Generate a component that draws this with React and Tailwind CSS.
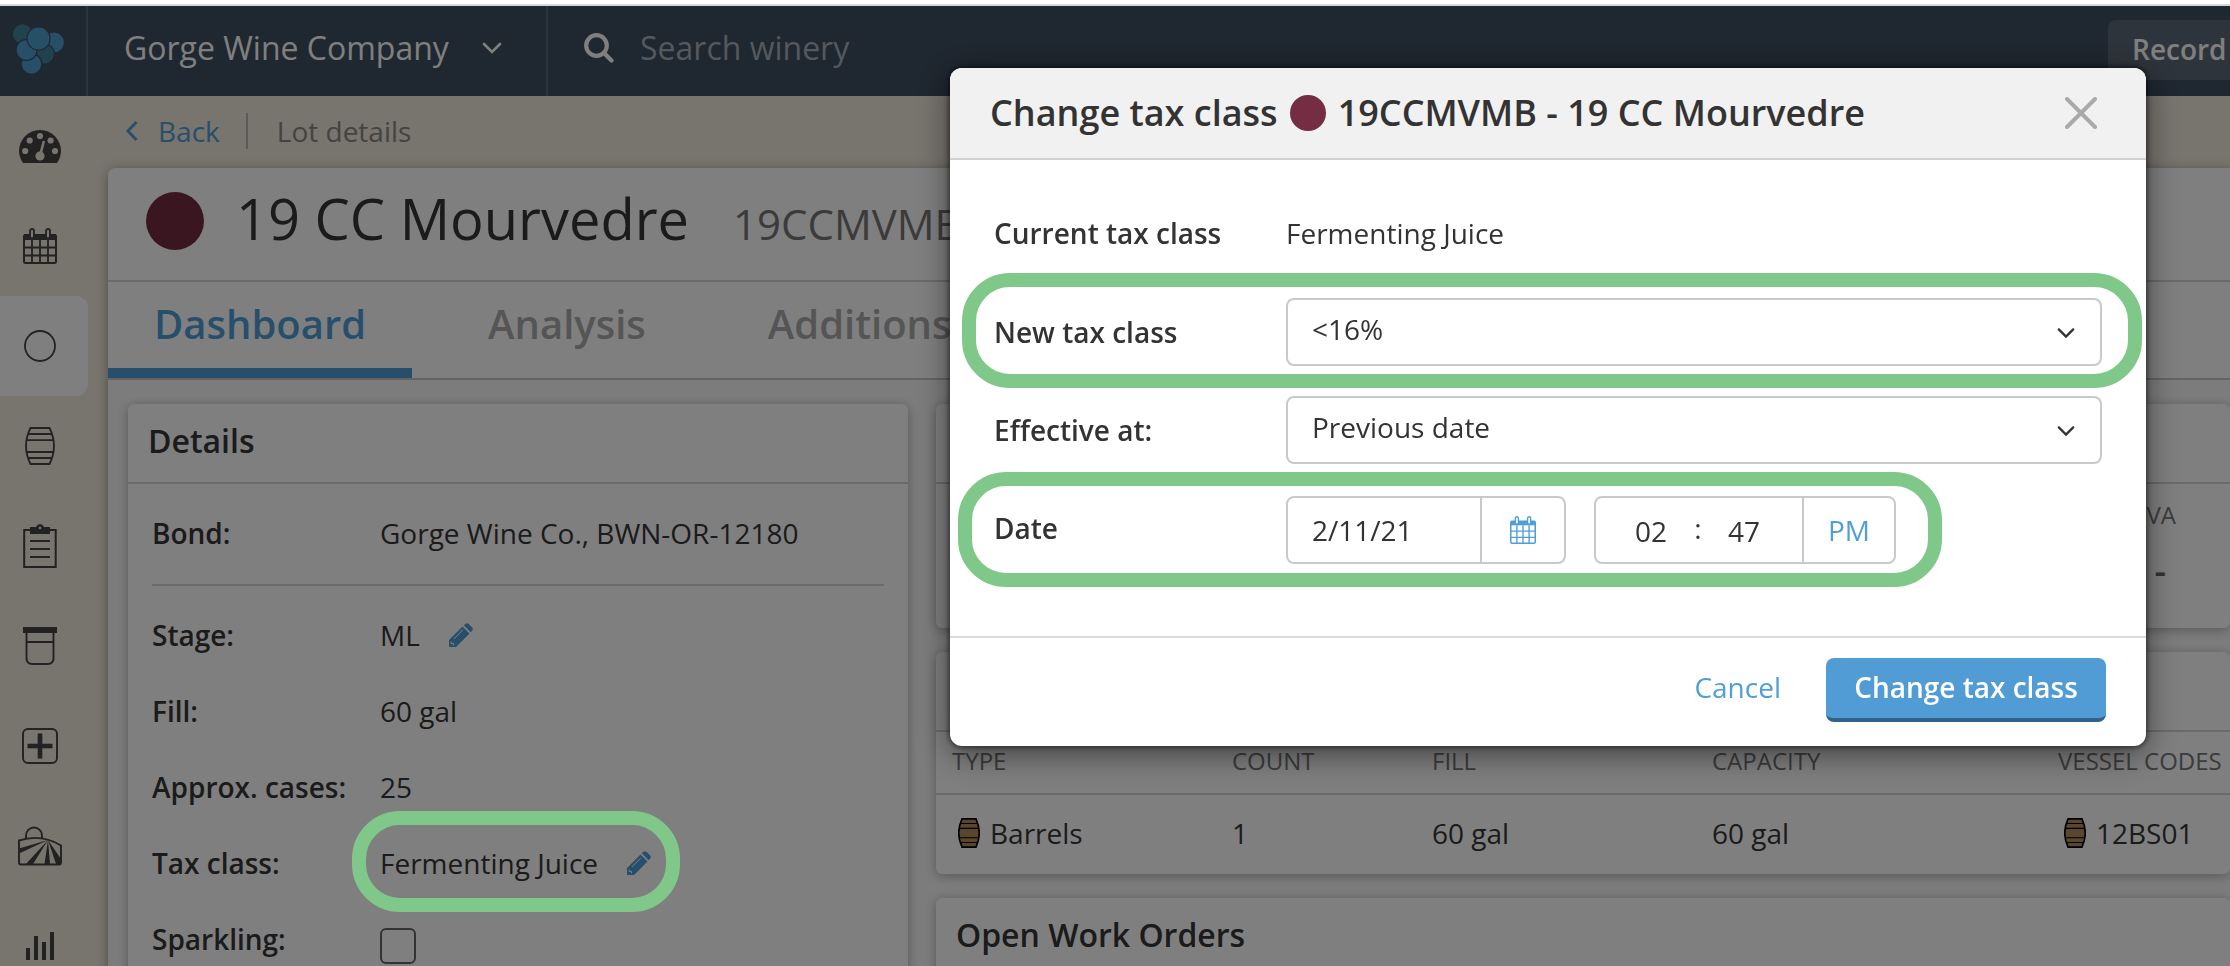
const blue = "text-[#4f9fd8]";

function Barrel({ className, filled }) {
  return (
    <svg viewBox="0 0 30 38" preserveAspectRatio="none" className={className} fill="none" stroke={filled ? "#000" : "#444"} strokeWidth={filled ? 2.2 : 1.8} aria-hidden="true">
      <path d="M5.500 1h19q9 18 0 36h-19q-9-18 0-36z" fill={filled ? "#b48c5c" : "none"} />
      <path d="M3.500 7h23M1.500 13.200h27M1.500 25h27M3 31h24" strokeWidth={filled ? 1.4 : 1.8} />
    </svg>
  );
}

function Chevron({ className }) {
  return (
    <svg viewBox="0 0 20 12" className={className} fill="none" stroke="currentColor" strokeWidth="2.600" strokeLinecap="round" aria-hidden="true">
      <path d="M2 2l8 8 8-8" />
    </svg>
  );
}

function CalendarIcon({ className }) {
  return (
    <svg viewBox="0 0 34 36" preserveAspectRatio="none" className={className} fill="none" stroke="currentColor" aria-hidden="true">
      <rect x="1" y="7" width="32" height="28" rx="1.500" strokeWidth="2" />
      <path d="M1 6h32v6H1z" fill="currentColor" stroke="none" />
      <path d="M1 19.500h32M1 27.500h32M9 12v23M17 12v23M25 12v23" strokeWidth="1.800" />
      <rect x="7" y="1" width="4" height="9.500" rx="2" strokeWidth="1.800" className="fill-[var(--cal-bg)]" />
      <rect x="23" y="1" width="4" height="9.500" rx="2" strokeWidth="1.800" className="fill-[var(--cal-bg)]" />
    </svg>
  );
}

function Pencil() {
  return (
    <svg viewBox="0 0 24 24" className="size-6" aria-hidden="true">
      <path fill="#4f9fd8" d="M0 24v-7L13.500 3.500l7 7L7 24zM14.800 2.300L16.500.8q1.500-1.300 3 0l3.700 3.700q1.300 1.500 0 3l-1.500 1.700z" />
      <path d="M4.800 16L14 6.800M2.200 18.500v2h2.300v1.800" stroke="#fff" strokeWidth="1" fill="none" />
    </svg>
  );
}

function Logo() {
  return (
    <svg viewBox="0 0 54 52" className="h-[52px] w-[54px]" stroke="#3e4e60" strokeWidth="1.200" aria-hidden="true">
      <circle cx="10.500" cy="11" r="10.300" fill="#3f8498" />
      <circle cx="42" cy="19.500" r="10.500" fill="#4f9fd0" />
      <circle cx="32.500" cy="31" r="10" fill="#3f8498" />
      <circle cx="19.500" cy="41" r="10.300" fill="#4f9fd0" />
      <circle cx="14.500" cy="27" r="10.500" fill="#4f9fd0" />
      <circle cx="26.500" cy="15.500" r="11.500" fill="#4f9fd0" />
    </svg>
  );
}

const sideIcons = [
  {
    label: "Dashboard",
    icon: (
      <svg viewBox="0 0 42 33" className="h-[33px] w-[42px]" aria-hidden="true">
        <path fill="#444" d="M4 33Q0 27 0 21A21 21 0 0 1 42 21Q42 27 38 33z" />
        <g fill="#f0e8dc">
          <circle cx="21" cy="6" r="3.100" /><circle cx="10.700" cy="10.500" r="3.100" /><circle cx="31.600" cy="10.500" r="3.100" />
          <circle cx="6.200" cy="21" r="3.100" /><circle cx="36" cy="21" r="3.100" /><circle cx="21" cy="26" r="4.600" />
        </g>
        <path d="M21 26l3.600-14" stroke="#f0e8dc" strokeWidth="2.600" strokeLinecap="round" />
      </svg>
    ),
  },
  { label: "Calendar", icon: <CalendarIcon className="h-9 w-[34px]" /> },
  { label: "Lots", active: true, icon: <svg viewBox="0 0 32 32" className="size-8" aria-hidden="true"><circle cx="16" cy="16" r="15" fill="none" stroke="#444" strokeWidth="1.800" /></svg> },
  { label: "Vessels", icon: <Barrel className="h-[38px] w-[30px]" /> },
  {
    label: "Work orders",
    icon: (
      <svg viewBox="0 0 34 44" className="h-11 w-[34px]" fill="none" stroke="#444" aria-hidden="true">
        <rect x="1.200" y="6" width="31.500" height="37" strokeWidth="2" />
        <path d="M7 3h6q1.500-3 4-3t4 3h6v7H7z" fill="#444" stroke="none" />
        <circle cx="17" cy="4" r="1.300" fill="#f0e8dc" stroke="none" />
        <path d="M7 17h20M7 25h20M7 33h20" strokeWidth="1.800" />
      </svg>
    ),
  },
  {
    label: "Tanks",
    icon: (
      <svg viewBox="0 0 34 38" className="h-[38px] w-[34px]" fill="none" stroke="#444" strokeWidth="1.900" aria-hidden="true">
        <path d="M0 0h34v6H0z" fill="#444" stroke="none" />
        <path d="M3.500 6v25q0 6 6 6h15q6 0 6-6V6M3.500 15h27" />
      </svg>
    ),
  },
  {
    label: "Add",
    icon: (
      <svg viewBox="0 0 36 36" className="size-9" fill="none" stroke="#444" aria-hidden="true">
        <rect x="1" y="1" width="34" height="34" rx="5" strokeWidth="1.900" />
        <path d="M5.500 18h25M18 5.500v25" strokeWidth="4.600" />
      </svg>
    ),
  },
  {
    label: "Vineyards",
    icon: (
      <svg viewBox="0 0 44 40" className="h-10 w-11" fill="none" stroke="#444" strokeWidth="1.900" aria-hidden="true">
        <path d="M1 14.500q22-7 42 5v17q0 2-2 2H3q-2 0-2-2z" />
        <path d="M8 12V9.500a8 8 0 0 1 16 0V12" />
        <path d="M30 14L1 22.500v5zM30 14L8 38h7zM30 14l-3.500 24h5.500zM30 14l8 24h5v-5z" fill="#444" stroke="none" />
      </svg>
    ),
  },
  {
    label: "Reports",
    icon: (
      <svg viewBox="0 0 28 28" className="size-7" fill="#444" aria-hidden="true">
        <path d="M0 16h4v12H0zM8 4h4v24H8zM16 10h4v18h-4zM24 0h4v28h-4z" />
      </svg>
    ),
  },
];

function Sidebar() {
  return (
    <nav className="flex w-[108px] shrink-0 flex-col text-[#444] [--cal-bg:#f0e8dc]">
      {sideIcons.map((s) => (
        <a key={s.label} href="#" aria-label={s.label} className={`flex h-[100px] w-[88px] shrink-0 items-center justify-center pr-2 ${s.active ? "rounded-r-xl bg-white" : ""}`}>
          {s.icon}
        </a>
      ))}
    </nav>
  );
}

function Header() {
  return (
    <header className="flex h-24 shrink-0 border-t-4 border-white bg-[#3e4e60] text-white">
      <div className="flex h-full w-full border-t-2 border-[#d5d9dc]">
        <a href="#" aria-label="Home" className="flex w-[88px] shrink-0 items-center border-r-2 border-[#5c6876] pb-1 pl-3"><Logo /></a>
        <button className="flex w-[460px] shrink-0 items-center justify-between border-r-2 border-[#5c6876] pl-9 pr-11 pb-1.5 text-[32px] text-white">
          Gorge Wine Company
          <Chevron className="h-3 w-5" />
        </button>
        <label className="flex flex-1 items-center gap-[26px] pb-1.5 pl-9">
          <svg viewBox="0 0 30 30" className="size-[30px]" fill="none" stroke="#fff" strokeWidth="4.200" strokeLinecap="round" aria-hidden="true">
            <circle cx="12.500" cy="12.500" r="10.300" /><path d="M20 20l7.500 7.500" />
          </svg>
          <input aria-label="Search winery" placeholder="Search winery" className="w-96 bg-transparent text-[32px] outline-none placeholder:text-[#aab0b8]" />
        </label>
        <div className="w-[122px] shrink-0 pt-[14px]">
          <button className="h-[60px] w-60 whitespace-nowrap rounded-lg bg-[#5c6876] pb-0.5 pl-6 text-left text-[28px] font-semibold">Record</button>
        </div>
      </div>
    </header>
  );
}

const card = "rounded-md bg-white shadow-[0_2px_12px_rgba(0,0,0,0.3)]";
const cardTitle = "px-5 pt-4 text-[32px] leading-[42px] font-semibold";

function Field({ label, children }) {
  return (
    <div className="flex h-[76px] items-center">
      <dt className="w-[228px] shrink-0 font-semibold">{label}</dt>
      <dd className="flex items-center">{children}</dd>
    </div>
  );
}

function Details() {
  return (
    <section className={`${card} h-[620px] w-[780px] shrink-0`}>
      <h2 className={`${cardTitle} h-20 border-b-2 border-[#d4d4d4]`}>Details</h2>
      <dl className="px-6 pt-[11px] text-[28px]">
        <div className="mb-[11px] border-b-2 border-[#d4d4d4] pb-[13px]">
          <Field label="Bond:">Gorge Wine Co., BWN-OR-12180</Field>
        </div>
        <Field label="Stage:">ML<button aria-label="Edit stage" className="ml-[29px]"><Pencil /></button></Field>
        <Field label="Fill:">60 gal</Field>
        <Field label="Approx. cases:">25</Field>
        <Field label="Tax class:">Fermenting Juice<button aria-label="Edit tax class" className="ml-[29px]"><Pencil /></button></Field>
        <Field label={<label htmlFor="sparkling">Sparkling:</label>}>
          <input id="sparkling" type="checkbox" className="mt-3.5 size-9 appearance-none rounded-md border-2 border-[#666]" />
        </Field>
      </dl>
    </section>
  );
}

function Vessels() {
  return (
    <section className={card}>
      <h2 className={`${cardTitle} h-20 border-b-2 border-[#d4d4d4]`}>Vessels</h2>
      <table className="w-full table-fixed text-left">
        <thead>
          <tr className="h-[62px] border-b-2 border-[#d4d4d4] align-top text-[24px] leading-[58px] text-[#777]">
            <th className="w-[296px] pl-4 font-normal">TYPE</th>
            <th className="w-[200px] font-normal">COUNT</th>
            <th className="w-[280px] font-normal">FILL</th>
            <th className="w-[346px] font-normal">CAPACITY</th>
            <th className="font-normal whitespace-nowrap">VESSEL CODES</th>
          </tr>
        </thead>
        <tbody>
          <tr className="h-20 text-[28px] *:pb-[3px]">
            <td className="pl-4"><span className="flex items-center gap-[10px] pl-1.5"><Barrel filled className="h-[30px] w-[22px]" />Barrels</span></td>
            <td>1</td>
            <td>60 gal</td>
            <td>60 gal</td>
            <td><span className="flex items-center gap-[10px] pl-1.5"><Barrel filled className="h-[30px] w-[22px]" />12BS01</span></td>
          </tr>
        </tbody>
      </table>
    </section>
  );
}

const ring = "pointer-events-none absolute rounded-[48px] border-[14px] border-[#80c88a]";
const box = "h-[68px] rounded-lg border-2 border-[#c9c9c9] bg-white";

function Select({ id, value }) {
  return (
    <div className="relative flex-1">
      <select id={id} className={`${box} w-full appearance-none pb-1.5 pl-6 text-[28px]`}>
        <option>{value}</option>
      </select>
      <Chevron className="pointer-events-none absolute top-[29px] right-[27px] h-3 w-[18px]" />
    </div>
  );
}

function Modal() {
  return (
    <div className="fixed inset-x-0 top-1.5 bottom-0 flex items-start justify-end bg-black/50 pt-[62px] pr-[84px]">
      <div role="dialog" aria-labelledby="dialog-title" className="w-[1196px] rounded-xl bg-white text-[28px] text-[#333] shadow-[0_8px_32px_rgba(0,0,0,0.5),0_0_4px_2px_rgba(0,0,0,0.4)]">
        <div className="flex h-[92px] items-center justify-between rounded-t-xl border-b-2 border-[#d0d0d0] bg-[#f1f1f1] pr-[49px] pl-10">
          <h1 id="dialog-title" className="flex items-center text-[36px] font-semibold">
            Change tax class
            <span className="mx-3 size-9 rounded-full bg-[#752d43]" />
            19CCMVMB - 19 CC Mourvedre
          </h1>
          <button aria-label="Close">
            <svg viewBox="0 0 32 32" className="size-8" stroke="#aaa" strokeWidth="4" strokeLinecap="round" aria-hidden="true"><path d="M2 2l28 28M30 2L2 30" /></svg>
          </button>
        </div>
        <div className="flex h-[476px] flex-col gap-[30px] px-11 pt-10">
          <div className="flex h-[68px] items-center pb-0.5"><span className="w-[292px] font-semibold">Current tax class</span>Fermenting Juice</div>
          <div className="relative flex items-center">
            <label htmlFor="new-class" className="w-[292px] font-semibold">New tax class</label>
            <Select id="new-class" value="<16%" />
            <div className={`${ring} -top-[25px] -right-10 -bottom-[22px] -left-8`} />
          </div>
          <div className="flex items-center">
            <label htmlFor="effective" className="w-[292px] font-semibold">Effective at:</label>
            <Select id="effective" value="Previous date" />
          </div>
          <div className="relative mt-0.5 flex items-center self-start">
            <label htmlFor="date" className="w-[292px] pb-1 font-semibold">Date</label>
            <div className={`${box} flex w-[280px]`}>
              <input id="date" defaultValue="2/11/21" className="w-[194px] border-r-2 border-[#c9c9c9] bg-transparent pl-6" />
              <button aria-label="Pick a date" className={`flex flex-1 items-center justify-center [--cal-bg:#fff] ${blue}`}><CalendarIcon className="h-7 w-[26px]" /></button>
            </div>
            <div className={`${box} ml-7 flex w-[302px]`}>
              <div className="flex w-[208px] items-center border-r-2 border-[#c9c9c9] pt-0.5 pl-9">
                <input aria-label="Hour" defaultValue="02" className="w-12 bg-transparent pl-[3px]" />
                <span className="w-11 pr-2 pb-1.5 text-center">:</span>
                <input aria-label="Minute" defaultValue="47" className="w-12 bg-transparent pl-1" />
              </div>
              <button className={`flex-1 ${blue}`}>PM</button>
            </div>
            <div className={`${ring} -top-6 -right-[46px] -bottom-[23px] -left-9`} />
          </div>
        </div>
        <div className="flex h-[110px] items-start justify-end gap-[45px] border-t-2 border-[#dadada] pt-5 pr-10">
          <button className={`h-[58px] ${blue}`}>Cancel</button>
          <button className="h-16 w-[280px] rounded-lg border-b-4 border-[#2e648c] bg-[#529cd5] pb-0.5 font-semibold text-white">Change tax class</button>
        </div>
      </div>
    </div>
  );
}

const tab = "flex items-center border-b-[10px] px-[46px] pb-0.5 text-[40px] font-semibold";

export default function App() {
  return (
    <div className="relative flex h-screen flex-col overflow-hidden bg-[#f0e8dc] font-['Open_Sans','Noto_Sans',sans-serif] text-[#363636]">
      <Header />
      <div className="flex min-h-0 flex-1">
        <Sidebar />
        <main className="min-w-0 flex-1">
          <div className="flex h-[72px] items-center pb-0.5 text-[28px]">
            <a href="#" className={`flex items-center gap-5 pl-[18px] ${blue}`}>
              <svg viewBox="0 0 12 20" className="h-5 w-3" fill="none" stroke="currentColor" strokeWidth="3" aria-hidden="true"><path d="M10.500 1L2 10l8.500 9" /></svg>
              Back
            </a>
            <span className="ml-[26px] h-9 border-l-2 border-[#bbb5ac] pl-[29px] leading-9 text-[#8a877f]">Lot details</span>
          </div>
          <div className="h-full rounded-tl-lg bg-[#f9f9f9] shadow-[0_2px_12px_rgba(0,0,0,0.35)]">
            <div className="flex h-[114px] items-center rounded-tl-lg border-b-2 border-[#d4d4d4] bg-white pb-1.5 pl-[38px]">
              <span className="mr-8 size-[58px] rounded-full bg-[#752d43]" />
              <h1 className="flex items-baseline gap-11 text-[56px] leading-[76px]">
                19 CC Mourvedre
                <span className="text-[42px] text-[#777]">19CCMVMB</span>
              </h1>
            </div>
            <div className="flex h-[98px] gap-[30px] border-b-2 border-[#c8c8c8] bg-white">
              <button className={`${tab} border-[#4f9fd8] ${blue}`}>Dashboard</button>
              <button className={`${tab} border-transparent text-[#aaa]`}>Analysis</button>
              <button className={`${tab} border-transparent text-[#aaa]`}>Additions</button>
            </div>
            <div className="flex items-start gap-7 pt-6 pl-5">
              <Details />
              <div className="flex min-w-0 flex-1 flex-col gap-6">
                <section className={`${card} h-56`}>
                  <div className="h-20 border-b-2 border-[#d4d4d4]" />
                  <dl className="flex justify-end pr-[54px]">
                    <div className="pt-[13px]">
                      <dt className="text-[24px] leading-9 text-[#777]">VA</dt>
                      <dd className="pt-4 pl-2 text-[36px] leading-[44px] font-semibold text-[#666]">-</dd>
                    </div>
                  </dl>
                </section>
                <Vessels />
                <section className={`${card} h-40`}>
                  <h2 className={cardTitle}>Open Work Orders</h2>
                </section>
              </div>
            </div>
          </div>
        </main>
      </div>
      <Modal />
      <div className={`${ring} top-[811px] left-[352px] h-[101px] w-[328px]`} />
    </div>
  );
}
